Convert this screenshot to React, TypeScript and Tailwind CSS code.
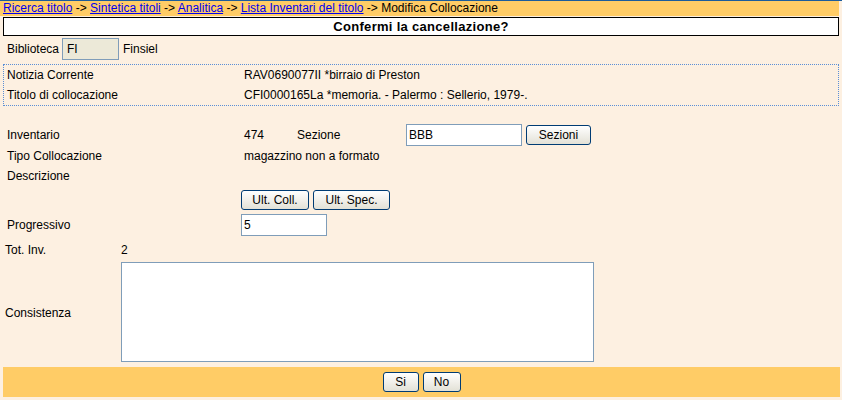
import React from "react";

const btn =
  "h-[20px] rounded-[3px] border border-[#003c74] bg-gradient-to-b from-white to-[#e3e1d6] text-[12px] leading-[18px] text-black text-center";
const input =
  "h-[22px] border border-[#7f9db9] px-[2px] text-[12px] leading-[20px] text-black";

function Crumb({ children }: { children: React.ReactNode }) {
  return <a className="text-[#0000ee] underline">{children}</a>;
}

export default function App() {
  return (
    <div className="w-[842px] h-[400px] overflow-hidden bg-[#fdf0e1] font-['Liberation_Sans',Arial,sans-serif] text-[12px] text-black border-t border-[#1b5c9c]">
      {/* breadcrumb */}
      <div className="w-[839px] h-[15px] bg-[#ffcc66] pl-[3px] leading-[15px] whitespace-nowrap">
        <Crumb>Ricerca titolo</Crumb> -&gt; <Crumb>Sintetica titoli</Crumb> -&gt;{" "}
        <Crumb>Analitica</Crumb> -&gt; <Crumb>Lista Inventari del titolo</Crumb> -&gt;
        Modifica Collocazione
      </div>

      {/* title */}
      <div className="mt-[1px] ml-[3px] w-[836px] h-[19px] border border-black bg-white text-center text-[13px] font-bold leading-[17px] tracking-[0.3px]">
        Confermi la cancellazione?
      </div>

      {/* biblioteca */}
      <div className="mt-[2px] flex h-[22px] items-center pl-[7px]">
        <span className="w-[55px]">Biblioteca</span>
        <div className={`${input} w-[57px] bg-[#ece9d8] pl-[4px]`}>FI</div>
        <span className="ml-[4px]">Finsiel</span>
      </div>

      {/* notizia box */}
      <div className="mt-[4px] ml-[3px] w-[836px] h-[42px] border border-dotted border-[#5b8fd6] pl-[3px]">
        <div className="flex h-[20px] items-center">
          <span className="w-[237px]">Notizia Corrente</span>
          <span>RAV0690077II *birraio di Preston</span>
        </div>
        <div className="flex h-[20px] items-center">
          <span className="w-[237px]">Titolo di collocazione</span>
          <span>CFI0000165La *memoria. - Palermo : Sellerio, 1979-.</span>
        </div>
      </div>

      {/* collocazione */}
      <div className="pl-[7px]">
        <div className="mt-[18px] flex h-[22px] items-center">
          <span className="w-[237px]">Inventario</span>
          <span className="w-[53px]">474</span>
          <span className="w-[109px]">Sezione</span>
          <div className={`${input} w-[116px] bg-white`}>BBB</div>
          <button className={`${btn} ml-[4px] w-[65px]`}>Sezioni</button>
        </div>
        <div className="flex h-[20px] items-center">
          <span className="w-[237px]">Tipo Collocazione</span>
          <span>magazzino non a formato</span>
        </div>
        <div className="flex h-[20px] items-center">
          <span>Descrizione</span>
        </div>
        <div className="mt-[4px] flex h-[20px] items-center pl-[234px] gap-[4px]">
          <button className={`${btn} w-[68px]`}>Ult. Coll.</button>
          <button className={`${btn} w-[77px]`}>Ult. Spec.</button>
        </div>
        <div className="mt-[4px] flex h-[22px] items-center">
          <span className="w-[234px]">Progressivo</span>
          <div className={`${input} w-[86px] bg-white`}>5</div>
        </div>
      </div>

      {/* consistenza */}
      <div className="pl-[5px]">
        <div className="mt-[4px] flex h-[20px] items-center">
          <span className="w-[116px]">Tot. Inv.</span>
          <span>2</span>
        </div>
        <div className="mt-[2px] flex h-[100px] items-center">
          <span className="w-[116px] pt-[2px]">Consistenza</span>
          <textarea className="h-[100px] w-[473px] resize-none border border-[#7f9db9] bg-white" />
        </div>
      </div>

      {/* footer */}
      <div className="mt-[5px] ml-[3px] flex h-[30px] w-[837px] items-center justify-center gap-[4px] bg-[#ffcc66]">
        <button className={`${btn} w-[36px]`}>Si</button>
        <button className={`${btn} w-[38px]`}>No</button>
      </div>
    </div>
  );
}
